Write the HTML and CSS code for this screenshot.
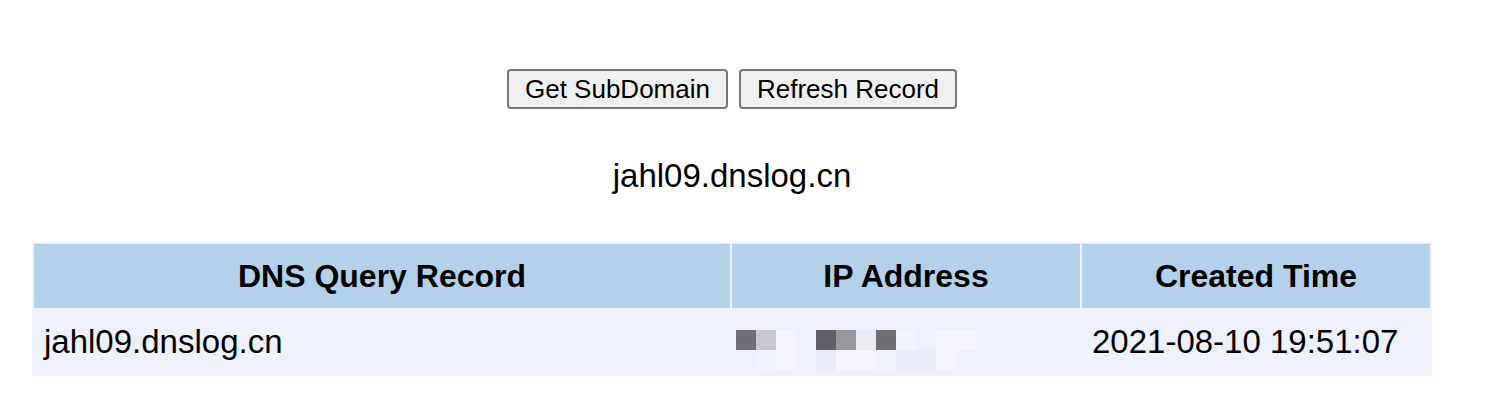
FILE: index.html
```html
<!DOCTYPE html>
<html>
<head>
<meta charset="utf-8">
<title>DNSLog</title>
<link rel="stylesheet" href="styles.css">
</head>
<body>
<div class="wrap">
  <div class="actions">
    <button class="btn" type="button">Get SubDomain</button>
    <button class="btn" type="button">Refresh Record</button>
  </div>
  <div class="domain">jahl09.dnslog.cn</div>
  <table class="records">
    <colgroup>
      <col class="c-name">
      <col class="c-ip">
      <col class="c-time">
    </colgroup>
    <thead>
      <tr>
        <th>DNS Query Record</th>
        <th>IP Address</th>
        <th>Created Time</th>
      </tr>
    </thead>
    <tbody>
      <tr>
        <td>jahl09.dnslog.cn</td>
        <td class="ip">
          <div class="redact">
            <span class="px d1"></span><span class="px l1"></span><span class="px w1"></span><span class="px"></span>
            <span class="px d2"></span><span class="px m1"></span><span class="px l2"></span><span class="px d3"></span>
            <span class="px w2"></span><span class="px"></span><span class="px w1"></span><span class="px w1"></span>
            <span class="px"></span><span class="px w2"></span><span class="px w1"></span><span class="px"></span>
            <span class="px l3"></span><span class="px w1"></span><span class="px w1"></span><span class="px w2"></span>
            <span class="px l3"></span><span class="px l3"></span><span class="px w1"></span><span class="px"></span>
          </div>
        </td>
        <td>2021-08-10 19:51:07</td>
      </tr>
    </tbody>
  </table>
</div>
</body>
</html>
```

FILE: styles.css
```css
html, body {
  background: #ffffff;
}

body {
  margin: 8px;
  font-family: "Liberation Sans", Arial, sans-serif;
  color: #000000;
}

.wrap {
  width: 1400px;
  margin-left: 24px;
  padding-top: 61px;
  text-align: center;
}

.actions {
  display: flex;
  justify-content: center;
  gap: 11px;
  height: 40px;
}

.btn {
  font-family: "Liberation Sans", Arial, sans-serif;
  font-size: 26px;
  line-height: 32px;
  height: 40px;
  padding: 2px 16px;
  color: #000000;
  background: #efefef;
  border: 2px solid #767676;
  border-radius: 4px;
}

.domain {
  margin-top: 48px;
  font-size: 33px;
  line-height: 37px;
  height: 37px;
}

.records {
  margin-top: 48px;
  width: 1400px;
  table-layout: fixed;
  border-collapse: separate;
  border-spacing: 2px;
  background: #eef1fb;
  font-size: 33px;
}

.c-name { width: 50%; }
.c-ip { width: 25%; }
.c-time { width: 25%; }

.records th {
  height: 64px;
  padding: 0;
  background: #b3d1eb;
  font-size: 32px;
  font-weight: bold;
  text-align: center;
  vertical-align: middle;
}

.records td {
  height: 64px;
  padding: 0 10px;
  background: #eef1fb;
  text-align: left;
  vertical-align: middle;
  white-space: nowrap;
}

.records td.ip {
  height: 40px;
  padding: 20px 4px 4px;
  vertical-align: top;
}

.redact {
  display: grid;
  grid-template-columns: repeat(12, 20px);
  grid-auto-rows: 20px;
  width: 240px;
}

.px { background: #eef0fb; }
.px.d1 { background: #6e6d78; }
.px.d2 { background: #605f68; }
.px.d3 { background: #6e6e73; }
.px.m1 { background: #97969b; }
.px.l1 { background: #c9c8d1; }
.px.l2 { background: #ebebf3; }
.px.l3 { background: #eaecf8; }
.px.w1 { background: #f4f5fd; }
.px.w2 { background: #f1f3fd; }
```
